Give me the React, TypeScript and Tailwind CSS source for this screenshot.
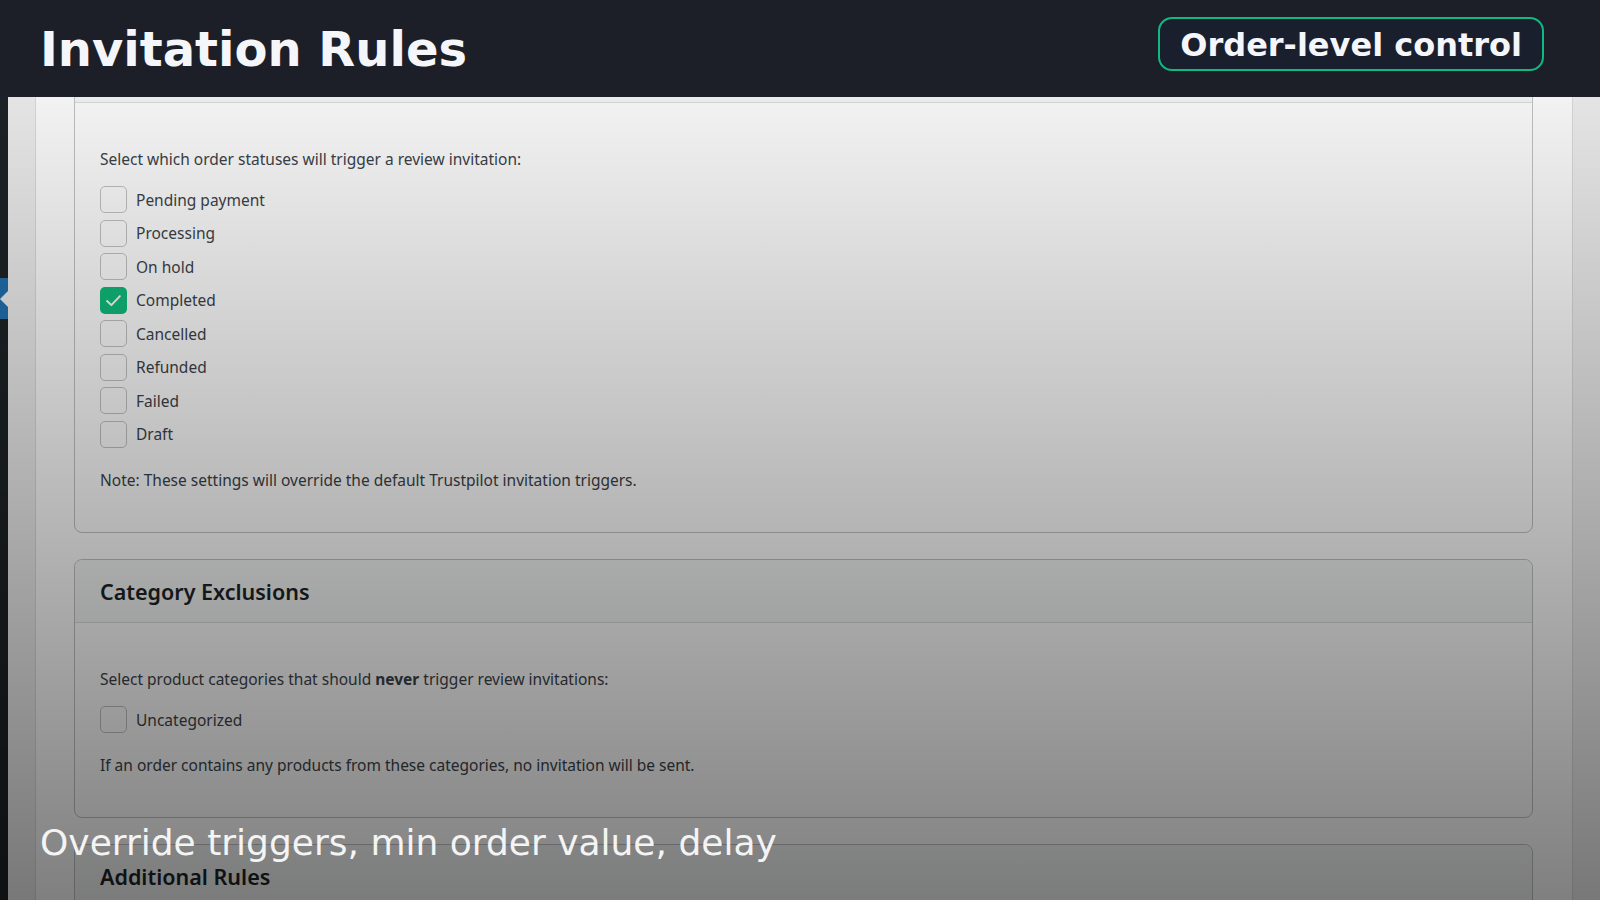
import { ReactNode } from "react";

const statuses = [
  { label: "Pending payment", checked: false },
  { label: "Processing", checked: false },
  { label: "On hold", checked: false },
  { label: "Completed", checked: true },
  { label: "Cancelled", checked: false },
  { label: "Refunded", checked: false },
  { label: "Failed", checked: false },
  { label: "Draft", checked: false },
];

function Checkbox({ checked }: { checked?: boolean }) {
  if (checked) {
    return (
      <span className="flex h-[27px] w-[27px] shrink-0 items-center justify-center rounded-[5px] bg-[#11bd7d]">
        <svg width="19" height="19" viewBox="0 0 16 16" fill="none">
          <path d="M2.6 8.4l3.6 3.5 7.2-7.6" stroke="white" strokeWidth="1.6" strokeLinecap="round" strokeLinejoin="round" />
        </svg>
      </span>
    );
  }
  return <span className="h-[27px] w-[27px] shrink-0 rounded-[5px] border-[1.5px] border-[#c3c4c7] bg-white" />;
}

function CheckRow({ label, checked }: { label: string; checked?: boolean }) {
  return (
    <label className="flex h-[33.5px] items-center gap-[9px]">
      <Checkbox checked={checked} />
      <span>{label}</span>
    </label>
  );
}

// title is left out for the card whose header is scrolled under the title bar
function Card({ title, children }: { title?: string; children?: ReactNode }) {
  return (
    <div className="rounded-lg border border-[#c3c4c7] bg-white">
      <div className="flex h-[63px] items-center rounded-t-lg border-b border-[#dcdcde] bg-[#f6f7f7] pl-[25px] pt-[2px]">
        {title && <h2 className="text-[21.5px] font-semibold text-[#1d2327]">{title}</h2>}
      </div>
      <div className="pl-[25px] pt-[46px] pb-[42px]">{children}</div>
    </div>
  );
}

export default function App() {
  return (
    <div
      className="relative flex h-[900px] w-[1600px] flex-col overflow-hidden bg-[#f0f0f1]"
      style={{ fontFamily: "'Noto Sans', 'Open Sans', sans-serif" }}
    >
      {/* Title bar */}
      <header
        className="relative z-10 flex h-[97px] shrink-0 items-center justify-between bg-[#1c1f27] pl-[40px] pr-[56px]"
        style={{ fontFamily: "'DejaVu Sans', sans-serif" }}
      >
        <h1 className="text-[48px] font-bold leading-[58px] text-[#f5f6fa]">Invitation Rules</h1>
        <div className="-mt-[10px] rounded-[14px] border-2 border-[#10b981] bg-[#1a1f2e] px-[20px] pt-[7px] pb-[5px] text-[32px] font-bold leading-[38px] text-[#f5f6fa]">
          Order-level control
        </div>
      </header>

      {/* Admin screen */}
      <div className="relative flex flex-1 overflow-hidden">
        {/* sidebar edge */}
        <div className="flex w-[8px] shrink-0 flex-col bg-[#1d2327]">
          <div className="h-[181px] shrink-0" />
          <div className="flex h-[41px] shrink-0 items-center justify-end bg-[#2271b1]">
            <span className="h-0 w-0 border-y-[8px] border-r-[8px] border-y-transparent border-r-[#f0f0f1]" />
          </div>
        </div>
        <div className="w-[27px] shrink-0 bg-[#f0f0f1]" />

        {/* settings panel */}
        <div className="w-[1538px] shrink-0 border-x border-[#dcdcde] bg-white pl-[38px] pr-[39px]">
          <div className="-mt-[58px] flex flex-col gap-[26px] text-[15.5px] leading-[20px] text-[#3c434a]">
            <Card>
              <p>Select which order statuses will trigger a review invitation:</p>
              <div className="mt-[14px] flex flex-col">
                {statuses.map((s) => (
                  <CheckRow key={s.label} label={s.label} checked={s.checked} />
                ))}
              </div>
              <p className="mt-[19px]">Note: These settings will override the default Trustpilot invitation triggers.</p>
            </Card>

            <Card title="Category Exclusions">
              <p>
                Select product categories that should <strong className="font-bold">never</strong> trigger review invitations:
              </p>
              <div className="mt-[14px]">
                <CheckRow label="Uncategorized" />
              </div>
              <p className="mt-[18px]">If an order contains any products from these categories, no invitation will be sent.</p>
            </Card>

            <Card title="Additional Rules" />
          </div>
        </div>
        <div className="flex-1 bg-[#f0f0f1]" />

        {/* dimming */}
        <div className="pointer-events-none absolute inset-0 bg-linear-to-b from-black/5 to-black/50" />
      </div>

      <p
        className="absolute left-[40px] top-[822px] text-[36px] leading-[42px] text-[#f4f4f4]"
        style={{ fontFamily: "'DejaVu Sans', sans-serif" }}
      >
        Override triggers, min order value, delay
      </p>
    </div>
  );
}
